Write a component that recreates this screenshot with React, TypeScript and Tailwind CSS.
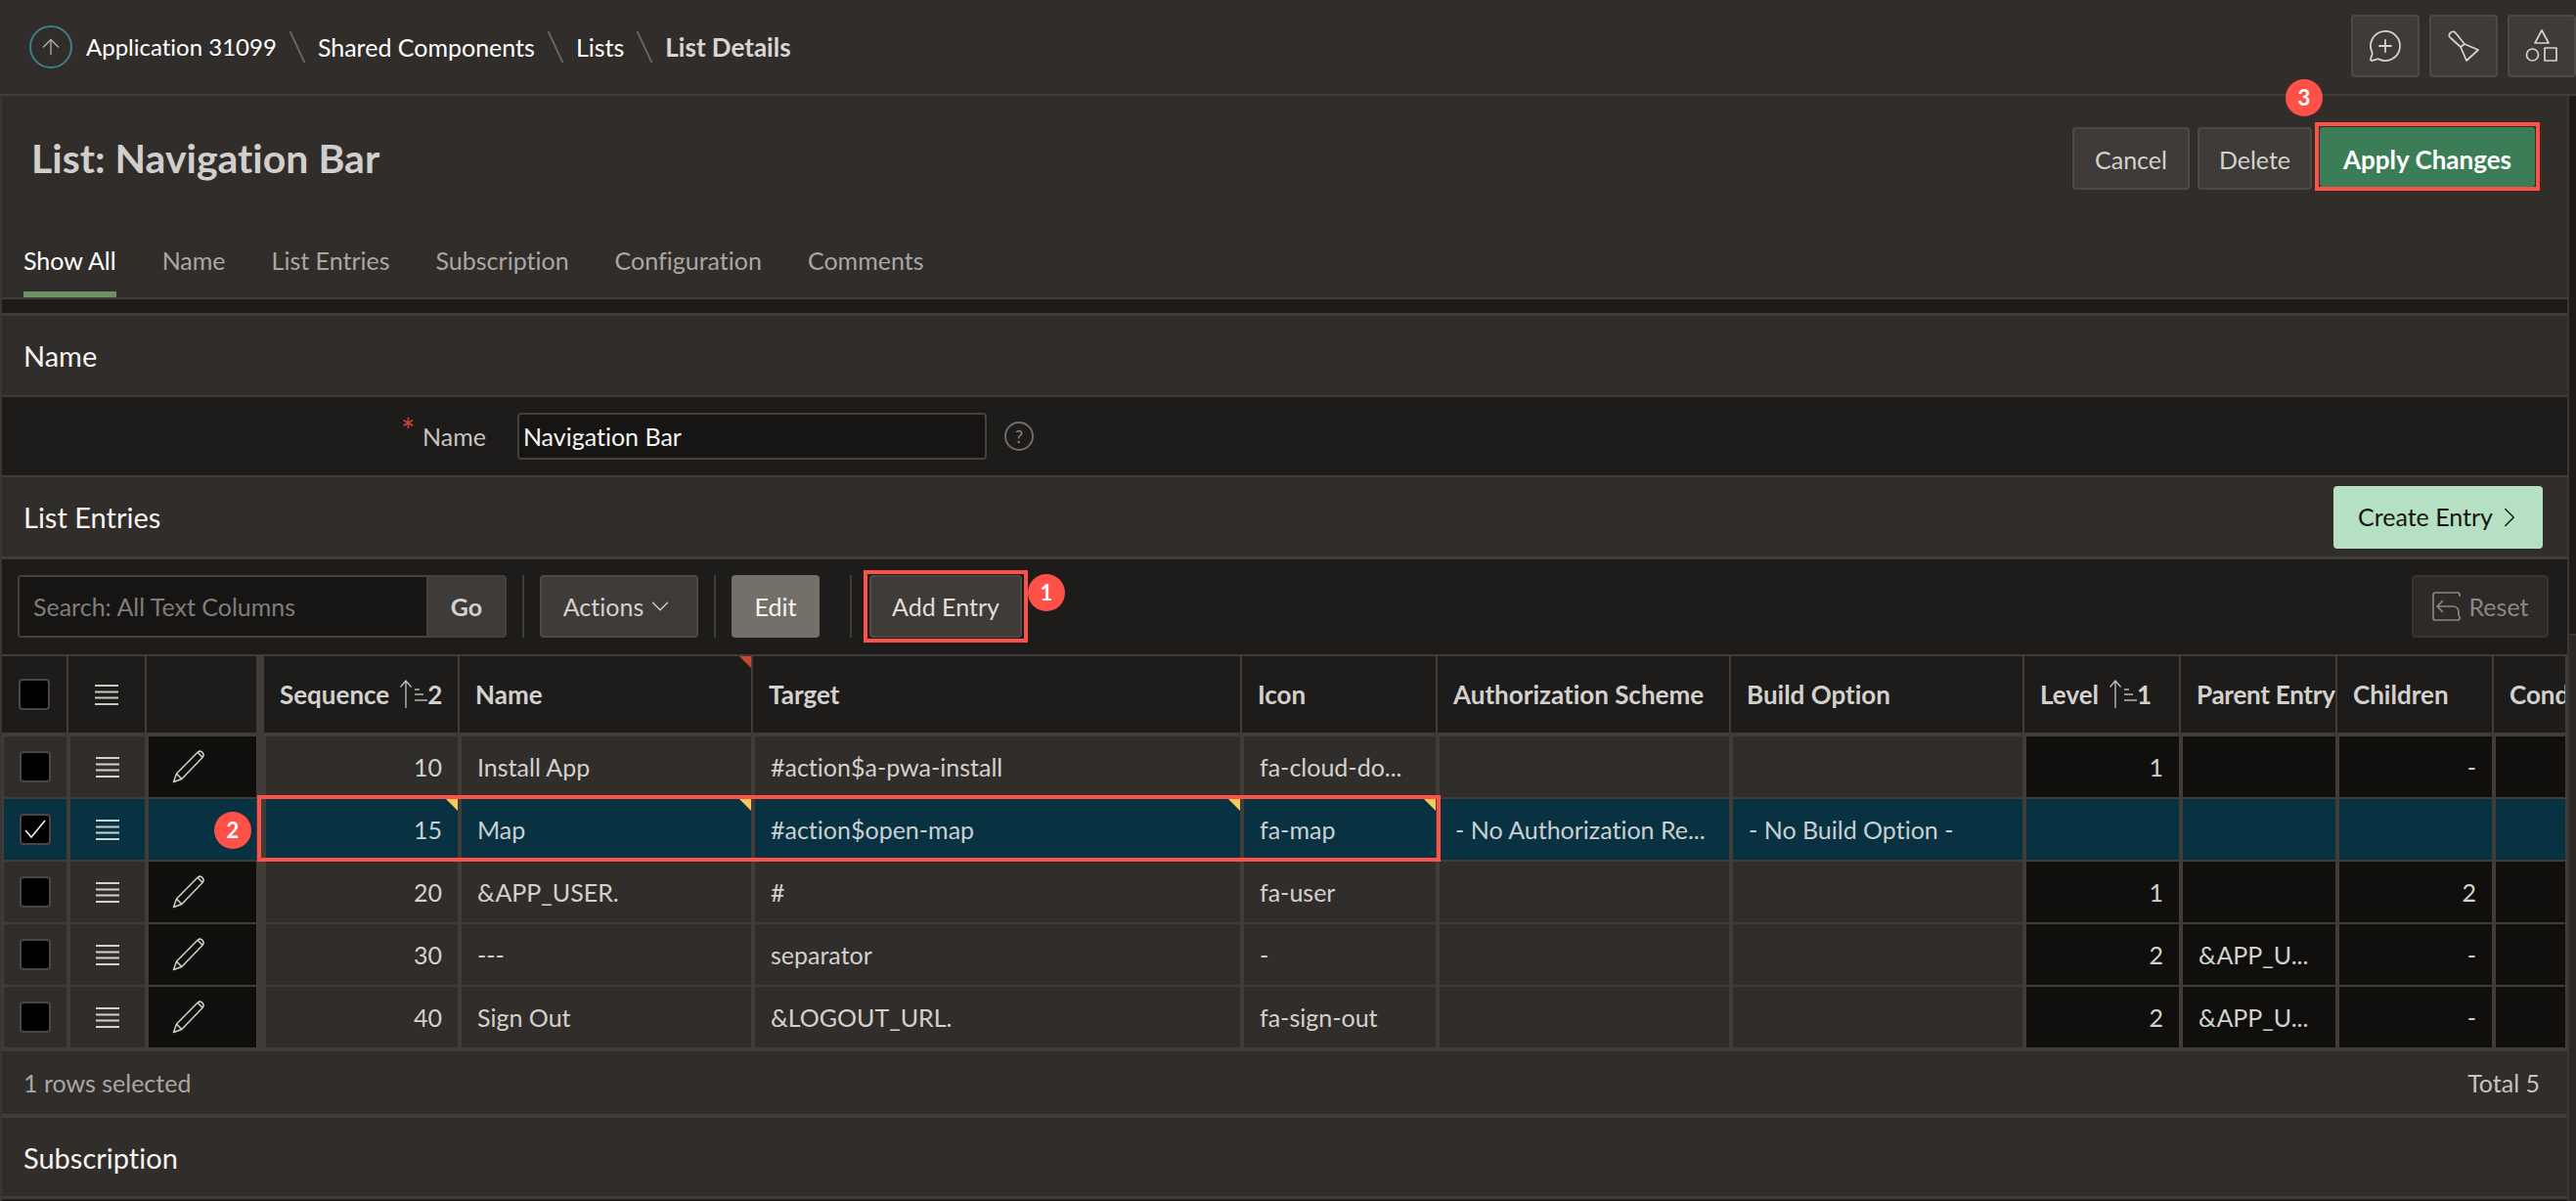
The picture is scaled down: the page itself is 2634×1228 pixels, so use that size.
import React from 'react';
import { ChevronDown, ChevronRight, MessageCirclePlus, ArrowUp } from 'lucide-react';

const headerCols =
  'grid grid-cols-[66px_78px_112px_204px_298px_498px_198px_298px_298px_158px_158px_158px_73px] gap-x-0.5';
const rowCols =
  'grid grid-cols-[64px_76px_110px_202px_296px_496px_196px_296px_296px_156px_156px_156px_71px] gap-x-1 gap-y-0.5';

const rows = [
  { seq: '10', name: 'Install App', target: '#action$a-pwa-install', icon: 'fa-cloud-do...', auth: '', build: '', level: '1', parent: '', children: '-' },
  { seq: '15', name: 'Map', target: '#action$open-map', icon: 'fa-map', auth: '- No Authorization Re...', build: '- No Build Option -', level: '', parent: '', children: '', selected: true },
  { seq: '20', name: '&APP_USER.', target: '#', icon: 'fa-user', auth: '', build: '', level: '1', parent: '', children: '2' },
  { seq: '30', name: '---', target: 'separator', icon: '-', auth: '', build: '', level: '2', parent: '&APP_U...', children: '-' },
  { seq: '40', name: 'Sign Out', target: '&LOGOUT_URL.', icon: 'fa-sign-out', auth: '', build: '', level: '2', parent: '&APP_U...', children: '-' },
];

const Hamburger = () => (
  <svg width="26" height="22" viewBox="0 0 26 22" fill="none" stroke="currentColor" strokeWidth="2">
    <path d="M1 2h24M1 8.500h24M1 14.500h24M1 21h24" />
  </svg>
);

const Pencil = () => (
  <svg width="34" height="34" viewBox="0 0 34 34" fill="none" stroke="currentColor" strokeWidth="1.500" strokeLinejoin="round">
    <path d="M1.500 32.500l3-8.500L26 2.300c1.500-1.400 3.700-1.200 5 .1 1.300 1.400 1.400 3.500 0 5L9.800 29.500z" />
    <path d="M4.500 24l5.300 5.500M26 2.300l5 5" />
  </svg>
);

const Checkbox = ({ checked }: { checked?: boolean }) => (
  <span className="flex h-8 w-8 items-center justify-center rounded-[4px] border-2 border-[#4a4643] bg-black">
    {checked && (
      <svg width="22" height="20" viewBox="0 0 22 20" fill="none" stroke="#f4f4f2" strokeWidth="1.600">
        <path d="M1 11l6 7L21 1" />
      </svg>
    )}
  </span>
);

const SortMark = ({ n }: { n: string }) => (
  <span className="ml-2.5 flex items-center">
    <svg width="14" height="30" viewBox="0 0 14 30" fill="none" stroke="#c4c2bf" strokeWidth="1.300">
      <path d="M7 29V1M1.500 7.500L7 1l5.500 6.500" />
    </svg>
    <svg width="13" height="16" viewBox="0 0 13 16" fill="none" stroke="#b8b6b3" strokeWidth="1.500" className="ml-0.5">
      <path d="M0 3h5M0 8h9M0 14h13" />
    </svg>
    <span className="font-bold">{n}</span>
  </span>
);

const Corner = ({ red }: { red?: boolean }) => (
  <span
    className={`absolute right-0 top-0 h-3 w-3 [clip-path:polygon(0_0,100%_0,100%_100%)] ${red ? 'bg-[#c74634]' : 'bg-[#f7c85c]'}`}
  />
);

const Badge = ({ n, className }: { n: string; className: string }) => (
  <span
    className={`absolute z-10 flex h-[38px] w-[38px] items-center justify-center rounded-full bg-[#ff5147] text-[22px] font-bold text-white ${className}`}
  >
    {n}
  </span>
);

const ToolButton = ({ children }: { children: React.ReactNode }) => (
  <button className="flex h-16 w-[70px] items-center justify-center rounded-[4px] border-2 border-[#4d4946] bg-[#3f3b38] text-[#d6d4d1]">
    {children}
  </button>
);

const PageButton = ({ label, className }: { label: string; className: string }) => (
  <button className={`mt-[5px] h-16 rounded-[4px] border-2 border-[#4d4946] bg-[#3f3b38] pt-0.5 text-[#d3d1ce] ${className}`}>
    {label}
  </button>
);

const CrumbSep = () => <span className="mx-5 h-[32px] w-0.5 skew-x-[25deg] bg-[#6b6764]" />;

const SectionHead = ({ title, children }: { title: string; children?: React.ReactNode }) => (
  <div className="flex h-[81px] items-center justify-between bg-[#312d2a] pl-[22px] pr-[25px]">
    <span className="text-[29px] text-[#f5f4f2]">{title}</span>
    {children}
  </div>
);

const Sep = ({ className }: { className: string }) => <span className={`block h-16 w-0.5 bg-[#403c38] ${className}`} />;

export default function App() {
  return (
    <div className="relative h-[1228px] w-[2634px] overflow-hidden bg-[#1e1c1a] font-['Lato',sans-serif] text-[25px] leading-none text-[#d3d1ce] [font-variant-ligatures:none]">
      {/* top bar */}
      <div className="flex h-[98px] items-center justify-between border-b-2 border-[#403c38] bg-[#312d2a] pl-[30px]">
        <div className="flex items-center text-white">
          <span className="mr-3.5 flex h-11 w-11 items-center justify-center rounded-full border-2 border-[#3f7f8c] text-[#b5b3b0]">
            <ArrowUp size={26} strokeWidth={1.2} />
          </span>
          <span className="text-[24px]">Application 31099</span>
          <CrumbSep />
          <span>Shared Components</span>
          <CrumbSep />
          <span>Lists</span>
          <CrumbSep />
          <span className="text-[26px] font-bold text-[#d9d7d4]">List Details</span>
        </div>
        <div className="-mt-0.5 flex gap-2.5">
          <ToolButton>
            <MessageCirclePlus size={36} strokeWidth={1.200} />
          </ToolButton>
          <ToolButton>
            <svg width="32" height="32" viewBox="0 0 32 32" fill="none" stroke="currentColor" strokeWidth="1.700" strokeLinejoin="round">
              <path d="M1.500 6.500C.5 4 3.500.5 6.500 1.500 7.500 2 8 3 9 4l8 10 14 6-12 11-6-14-10-9z" />
              <path d="M17 14l-4 3" />
            </svg>
          </ToolButton>
          <ToolButton>
            <svg width="36" height="36" viewBox="0 0 36 36" fill="none" stroke="currentColor" strokeWidth="1.700" strokeLinejoin="round">
              <path d="M18 2l7 13H11z" />
              <circle cx="8.500" cy="27" r="6" />
              <rect x="21" y="20" width="12" height="13" />
            </svg>
          </ToolButton>
        </div>
      </div>

      <div className="flex">
        <main className="w-[2625px] border-l-2 border-[#3a3633]">
          {/* title + tabs */}
          <div className="border-b-2 border-[#403c38] bg-[#312d2a]">
            <div className="flex h-[131px] items-start justify-between pl-[30px] pr-[28px] pt-[27px]">
              <h1 className="mt-4 text-[41px] font-bold text-[#d0cfcd]">List: Navigation Bar</h1>
              <div className="flex items-start">
                <PageButton label="Cancel" className="w-[120px]" />
                <PageButton label="Delete" className="ml-2 w-[117px]" />
                <div className="ml-[3px] border-4 border-[#ff5147] px-px pt-px">
                  <button className="h-[61px] w-[220px] rounded-[3px] bg-[#3a7d57] pt-1 text-[26px] font-bold text-white">Apply Changes</button>
                </div>
              </div>
            </div>
            <div className="flex h-[75px] gap-[47px] pl-[22px]">
              <span className="flex items-center border-b-[6px] border-[#6b9464] pt-1.5 text-white">Show All</span>
              {['Name', 'List Entries', 'Subscription', 'Configuration', 'Comments'].map((t) => (
                <span key={t} className="flex items-center border-b-[6px] border-transparent pt-1.5 text-[#a9a7a4]">
                  {t}
                </span>
              ))}
            </div>
          </div>

          <div className="h-[14px]" />

          {/* Name */}
          <div className="border-b-2 border-t-[3px] border-[#403c38]">
            <SectionHead title="Name" />
          </div>
          <div className="flex h-[80px] items-center">
            <span className="mb-3 ml-[408px] w-[20px] text-[34px] text-[#c74634]">*</span>
            <span className="ml-[2px] text-[#c6c4c1]">Name</span>
            <span className="ml-[32px] flex h-12 w-[480px] items-center rounded-[4px] border-2 border-[#45413e] bg-[#161513] pl-1 text-[#f5f4f2]">
              Navigation Bar
            </span>
            <span className="ml-[18px] flex h-[30px] w-[30px] items-center justify-center rounded-full border-2 border-[#6f6b68] text-[18px] text-[#8c8986]">
              ?
            </span>
          </div>

          {/* List Entries */}
          <div className="border-t-2 border-[#403c38]">
            <SectionHead title="List Entries">
              <button className="flex h-16 w-[214px] items-center justify-center rounded-[4px] bg-[#b5e0c4] text-[#161513]">
                Create Entry
                <ChevronRight size={34} strokeWidth={1} className="-mr-2" />
              </button>
            </SectionHead>
          </div>

          <div className="border-t-[3px] border-[#403c38]">
            <div className="flex h-[99px] items-center border-b-2 border-[#403c38] pb-px pl-4 pr-[19px]">
              <div className="flex h-16 w-[500px] rounded-[4px] border-2 border-[#45413e] bg-[#161513]">
                <span className="flex flex-1 items-center pl-3.5 text-[#807d7a]">Search: All Text Columns</span>
                <span className="flex w-[80px] items-center justify-center border-l-2 border-[#45413e] bg-[#3f3b38] font-bold text-[#d3d1ce]">
                  Go
                </span>
              </div>
              <Sep className="ml-4" />
              <button className="ml-4 flex h-16 w-[162px] items-center justify-center gap-0.5 rounded-[4px] border-2 border-[#4d4946] bg-[#3f3b38]">
                Actions
                <ChevronDown size={30} strokeWidth={1} />
              </button>
              <Sep className="ml-4" />
              <button className="ml-4 h-16 w-[90px] rounded-[4px] bg-[#756f6a] text-[#f5f4f2]">Edit</button>
              <Sep className="ml-[31px]" />
              <div className="ml-3 border-4 border-[#ff5147] px-0.5 py-px">
                <button className="h-16 w-[156px] rounded-[4px] border-2 border-[#4d4946] bg-[#3f3b38] text-[#e0dfdc]">Add Entry</button>
              </div>
              <button className="ml-auto flex h-16 w-[140px] items-center justify-center gap-2 rounded-[4px] border-2 border-[#383431] bg-[#2d2a27] text-[#8a8784]">
                <svg width="30" height="30" viewBox="0 0 30 30" fill="none" stroke="currentColor" strokeWidth="1.700" strokeLinejoin="round">
                  <path d="M28 5V3a2 2 0 0 0-2-2H3a2 2 0 0 0-2 2v24a2 2 0 0 0 2 2h23a2 2 0 0 0 2-2v-2" />
                  <path d="M11 9l-6 6 6 6M5 15h16c4 0 6 3 6 6v4" />
                </svg>
                Reset
              </button>
            </div>

            {/* grid header */}
            <div className={`${headerCols} h-[82px] bg-[#403c38] pb-1`}>
              <div className="flex items-center justify-center bg-[#1e1c1a]">
                <Checkbox />
              </div>
              <div className="flex items-center justify-center bg-[#1e1c1a] text-[#c9c7c4]">
                <Hamburger />
              </div>
              <div className="bg-[#1e1c1a]" />
              {['Sequence', 'Name', 'Target', 'Icon', 'Authorization Scheme', 'Build Option', 'Level', 'Parent Entry', 'Children', 'Cond'].map((h, i) => (
                <div
                  key={h}
                  className={`relative flex items-center overflow-hidden whitespace-nowrap bg-[#1e1c1a] pl-4 text-[26px] font-bold text-[#d3d1ce] ${i === 0 ? 'ml-1.5' : ''} ${h === 'Parent Entry' ? 'tracking-[-0.01em]' : ''}`}
                >
                  {h}
                  {h === 'Sequence' && <SortMark n="2" />}
                  {h === 'Level' && <SortMark n="1" />}
                  {h === 'Name' && <Corner red />}
                </div>
              ))}
            </div>

            {/* grid rows */}
            <div className="relative bg-[#403c38] pb-1 pl-0.5">
              <div className={rowCols}>
                {rows.map((r) => {
                  const bg = r.selected ? 'bg-[#083242] text-[#c8d0d2]' : 'bg-[#312d2a]';
                  const dark = r.selected ? 'bg-[#083242]' : 'bg-[#100f0e]';
                  const cell = `relative flex h-[62px] items-center overflow-hidden whitespace-nowrap pl-4 pr-4 ${bg}`;
                  const darkCell = `relative flex h-[62px] items-center overflow-hidden whitespace-nowrap px-4 ${dark}`;
                  return (
                    <React.Fragment key={r.seq}>
                      <div className={`flex h-[62px] items-center justify-center ${bg}`}>
                        <Checkbox checked={r.selected} />
                      </div>
                      <div className={`flex h-[62px] items-center justify-center ${bg}`}>
                        <Hamburger />
                      </div>
                      <div className={`flex h-[62px] items-center pl-6 ${dark}`}>
                        {!r.selected && <Pencil />}
                      </div>
                      <div className={`${cell} ml-1.5 justify-end`}>
                        {r.seq}
                        {r.selected && <Corner />}
                      </div>
                      <div className={cell}>
                        {r.name}
                        {r.selected && <Corner />}
                      </div>
                      <div className={cell}>
                        {r.target}
                        {r.selected && <Corner />}
                      </div>
                      <div className={cell}>
                        {r.icon}
                        {r.selected && <Corner />}
                      </div>
                      <div className={cell}>{r.auth}</div>
                      <div className={cell}>{r.build}</div>
                      <div className={`${darkCell} justify-end`}>{r.level}</div>
                      <div className={darkCell}>{r.parent}</div>
                      <div className={`${darkCell} justify-end`}>{r.children}</div>
                      <div className={darkCell} />
                    </React.Fragment>
                  );
                })}
              </div>
              <div className="absolute left-[261px] top-[60px] h-[68px] w-[1210px] border-4 border-[#ff5147]" />
              <Badge n="2" className="left-[217px] top-[77px]" />
            </div>

            {/* grid footer */}
            <div className="flex h-[64px] items-center justify-between bg-[#312d2a] pl-[22px] pr-[28px] text-[#a9a7a4]">
              <span>1 rows selected</span>
              <span className="text-[#c6c4c1]">Total 5</span>
            </div>
          </div>

          <div className="border-b-[3px] border-t-4 border-[#403c38]">
            <div className="flex h-[80px] items-center bg-[#312d2a] pl-[22px] text-[29px] text-[#f5f4f2]">Subscription</div>
          </div>
        </main>
        <aside className="flex-1">
          <div className="h-[552px] border-b-2 border-l-2 border-[#3a3633]" />
          <div className="h-[578px] border-l-2 border-[#3a3633] bg-[#2b2825]" />
        </aside>
      </div>

      <Badge n="1" className="left-[1051px] top-[587px]" />
      <Badge n="3" className="left-[2337px] top-[81px]" />
    </div>
  );
}
